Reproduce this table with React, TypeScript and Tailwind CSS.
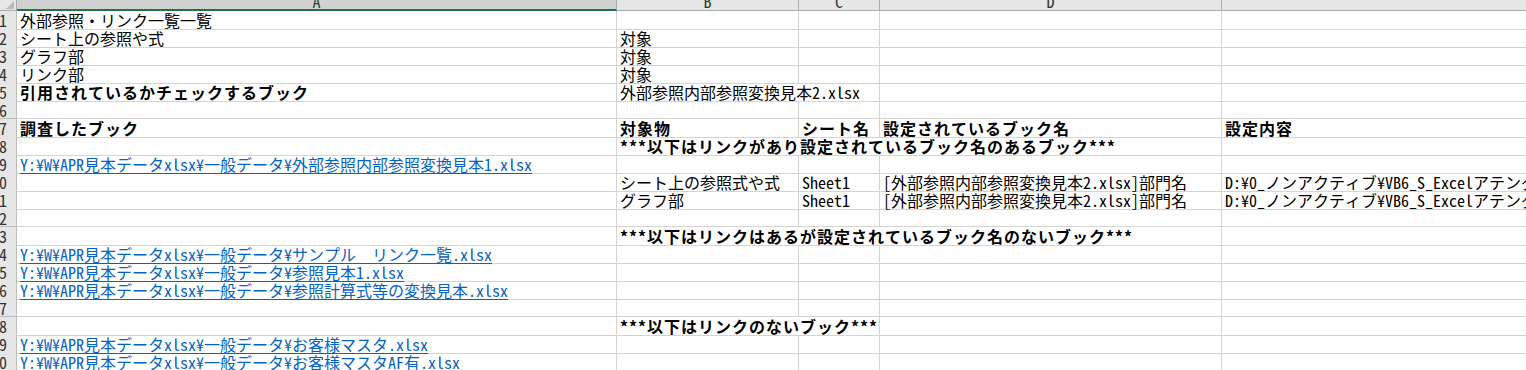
import React from "react";

type Cell = { t: string; b?: boolean; link?: boolean; span?: number } | null | "skip";

const FONT = '"Noto Sans Mono CJK JP", "Noto Sans CJK JP", monospace';

const LINK_PREFIX = "Y:¥W¥APR見本データxlsx¥一般データ¥";
const E_TEXT = "D:¥0_ノンアクティブ¥VB6_S_Excelアテンダント¥外部参照リンク一覧.xlsm";

const rows: Cell[][] = [
  [{ t: "外部参照・リンク一覧一覧" }, null, null, null, null],
  [{ t: "シート上の参照や式" }, { t: "対象" }, null, null, null],
  [{ t: "グラフ部" }, { t: "対象" }, null, null, null],
  [{ t: "リンク部" }, { t: "対象" }, null, null, null],
  [{ t: "引用されているかチェックするブック", b: true }, { t: "外部参照内部参照変換見本2.xlsx", span: 2 }, "skip", null, null],
  [null, null, null, null, null],
  [
    { t: "調査したブック", b: true },
    { t: "対象物", b: true },
    { t: "シート名", b: true },
    { t: "設定されているブック名", b: true },
    { t: "設定内容", b: true },
  ],
  [null, { t: "***以下はリンクがあり設定されているブック名のあるブック***", b: true, span: 3 }, "skip", "skip", null],
  [{ t: LINK_PREFIX + "外部参照内部参照変換見本1.xlsx", link: true }, null, null, null, null],
  [null, { t: "シート上の参照式や式" }, { t: "Sheet1" }, { t: "[外部参照内部参照変換見本2.xlsx]部門名" }, { t: E_TEXT }],
  [null, { t: "グラフ部" }, { t: "Sheet1" }, { t: "[外部参照内部参照変換見本2.xlsx]部門名" }, { t: E_TEXT }],
  [null, null, null, null, null],
  [null, { t: "***以下はリンクはあるが設定されているブック名のないブック***", b: true, span: 3 }, "skip", "skip", null],
  [{ t: LINK_PREFIX + "サンプル　リンク一覧.xlsx", link: true }, null, null, null, null],
  [{ t: LINK_PREFIX + "参照見本1.xlsx", link: true }, null, null, null, null],
  [{ t: LINK_PREFIX + "参照計算式等の変換見本.xlsx", link: true }, null, null, null, null],
  [null, null, null, null, null],
  [null, { t: "***以下はリンクのないブック***", b: true, span: 2 }, "skip", null, null],
  [{ t: LINK_PREFIX + "お客様マスタ.xlsx", link: true }, null, null, null, null],
  [{ t: LINK_PREFIX + "お客様マスタAF有.xlsx", link: true }, null, null, null, null],
];

const spanClass: Record<number, string> = { 1: "", 2: "col-span-2", 3: "col-span-3" };

const GRID = "grid grid-cols-[17px_600px_182px_81px_342px_305px]";

export default function App() {
  return (
    <div
      className="w-[1526px] h-[370px] overflow-hidden bg-white text-black text-[16px]"
      style={{ fontFamily: FONT }}
    >
      {/* column header */}
      <div className={`${GRID} h-[11px]`}>
        <div className="relative bg-[#e6e6e6] border-r border-b border-[#ababab] overflow-hidden">
          <svg className="absolute right-[2px] bottom-[1px]" width="8" height="8" viewBox="0 0 8 8">
            <polygon points="8,0 8,8 0,8" fill="#b9b9b9" />
          </svg>
        </div>
        <div className="bg-[#d2d2d2] border-r border-[#ababab] border-b-2 border-b-[#217346] overflow-hidden flex justify-center">
          <span className="leading-[15px] -mt-[6px] text-[#1f4e33]">A</span>
        </div>
        {["B", "C", "D", ""].map((l, i) => (
          <div
            key={i}
            className="bg-[#e6e6e6] border-r border-b border-[#ababab] overflow-hidden flex justify-center"
          >
            <span className="leading-[15px] -mt-[6px] text-[#333]">{l}</span>
          </div>
        ))}
      </div>
      {rows.map((r, ri) => (
        <div key={ri} className={`${GRID} h-[18px]`}>
          <div className="bg-[#e6e6e6] border-r border-b border-[#bdbdbd] overflow-hidden flex justify-end pr-[9px] pt-[1px] text-[#333] leading-[17px] whitespace-nowrap">
            {ri + 1}
          </div>
          {r.map((c, ci) => {
            if (c === "skip") return null;
            if (c === null)
              return <div key={ci} className="border-r border-b border-[#d4d4d4]" />;
            return (
              <div
                key={ci}
                className={`${spanClass[c.span ?? 1]} relative z-10 border-r border-b border-[#d4d4d4] pl-[3px] pt-[1px] whitespace-nowrap leading-[17px] ${
                  c.b ? "font-bold tracking-[1px]" : ""
                } ${c.link ? "text-[#0563c1] underline underline-offset-[2px]" : ""}`}
              >
                {c.t}
              </div>
            );
          })}
        </div>
      ))}
    </div>
  );
}
